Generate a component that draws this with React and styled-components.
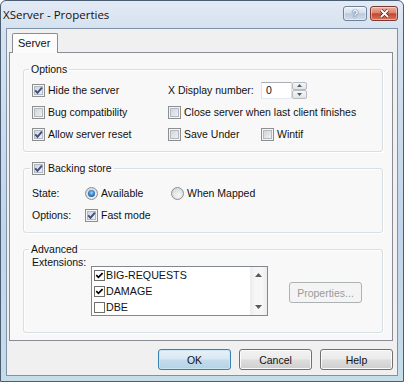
import React from "react";
import styled, { createGlobalStyle } from "styled-components";

const GlobalStyle = createGlobalStyle`
  html, body {
    margin: 0;
    padding: 0;
  }
  body {
    width: 404px;
    height: 382px;
    overflow: hidden;
    background: #ffffff;
    font-family: "Liberation Sans", Arial, sans-serif;
    font-size: 10.5px;
    color: #111;
  }
`;

const Window = styled.div`
  width: 404px;
  height: 382px;
  box-sizing: border-box;
  display: flex;
  flex-direction: column;
  border: 1px solid #4a5d73;
  border-radius: 6px 6px 0 0;
  background: linear-gradient(#e2eaf5 0, #d6e2f0 28px, #c2d5ea 60%, #c6dde9 100%);
`;

const TitleBar = styled.div`
  height: 27px;
  flex: none;
  display: flex;
  align-items: flex-start;
  justify-content: space-between;
  padding: 0 5px 0 2px;
`;

const Title = styled.div`
  font-family: "Open Sans", "Noto Sans", sans-serif;
  font-size: 11.5px;
  line-height: 27px;
  color: #111;
`;

const CaptionButtons = styled.div`
  display: flex;
  gap: 3px;
  margin-top: 5px;
`;

const CaptionButton = styled.div`
  width: ${(p) => (p.$close ? 28 : 24)}px;
  height: 15px;
  box-sizing: border-box;
  border: 1px solid ${(p) => (p.$close ? "#7a3a30" : "#6f8299")};
  border-radius: 3px;
  display: flex;
  align-items: center;
  justify-content: center;
  background: ${(p) =>
    p.$close
      ? "linear-gradient(#eab0a2, #d98470 45%, #c4462f 52%, #d8735c)"
      : "linear-gradient(#eef3f9, #d3deeb 45%, #bccbdd 52%, #cfdcea)"};
  box-shadow: inset 0 0 0 1px rgba(255, 255, 255, 0.45);
  color: #fff;
  font-weight: bold;
  font-size: 11px;
  text-shadow: 0 0 1px #34475e, 0 0 1px #34475e;
`;

const Frame = styled.div`
  flex: 1;
  display: flex;
  padding: 0 5px 5px 5px;
`;

const Client = styled.div`
  flex: 1;
  display: flex;
  flex-direction: column;
  border: 1px solid #7f93a8;
  background: #f0f0f0;
  padding: 4px 4px 0 2px;
`;

const Tab = styled.div`
  align-self: flex-start;
  margin-left: 3px;
  margin-bottom: -1px;
  height: 20px;
  box-sizing: border-box;
  padding: 0 7px 0 5px;
  line-height: 19px;
  font-size: 11px;
  border: 1px solid #898c95;
  border-bottom: none;
  border-radius: 2px 2px 0 0;
  background: #fcfcfc;
  position: relative;
  z-index: 1;
`;

const Panel = styled.div`
  display: flex;
  flex-direction: column;
  gap: 10px;
  border: 1px solid #898c95;
  background: #f8f8f8;
  padding: 10px 9px 7px 13px;
`;

const Group = styled.fieldset`
  margin: 0;
  min-width: 0;
  border: 1px solid #d5dfe5;
  border-radius: 3px;
  box-shadow: inset 1px 1px 0 #ffffff, 1px 1px 0 #ffffff;
  padding: ${(p) => p.$pad};
`;

const GroupLegend = styled.legend`
  display: flex;
  align-items: center;
  gap: 3px;
  padding: 0 2px;
  margin-left: ${(p) => p.$shift}px;
  line-height: 13px;
`;

const OptionsGrid = styled.div`
  display: grid;
  grid-template-columns: 136px 93px 1fr;
  grid-auto-rows: 22px;
  align-items: center;
`;

const BackingGrid = styled.div`
  display: grid;
  grid-template-columns: 53px 86px 1fr;
  grid-auto-rows: 22px;
  align-items: center;
`;

const Cell = styled.div`
  display: flex;
  align-items: center;
  grid-column: ${(p) => p.$span || "auto"};
`;

const CheckLabel = styled.label`
  display: flex;
  align-items: center;
  gap: 3px;
  white-space: nowrap;
  line-height: 13px;
`;

const CheckBox = styled.span`
  width: 13px;
  height: 13px;
  box-sizing: border-box;
  flex: none;
  display: flex;
  align-items: center;
  justify-content: center;
  border: 1px solid #8e8f8f;
  background: linear-gradient(135deg, #c9ced5, #f7f7f7);
  box-shadow: inset 0 0 0 1px #f4f4f4, inset 0 0 0 2px #b3b9c0;
`;

const RadioDot = styled.span`
  width: 13px;
  height: 13px;
  box-sizing: border-box;
  flex: none;
  border-radius: 50%;
  display: flex;
  align-items: center;
  justify-content: center;
  border: 1px solid #8e8f8f;
  background: radial-gradient(circle at 60% 65%, #f8f8f8, #c9ced5);
  &::after {
    content: "";
    display: ${(p) => (p.$checked ? "block" : "none")};
    width: 7px;
    height: 7px;
    border-radius: 50%;
    background: radial-gradient(circle at 50% 40%, #9ad6f7 0, #2b78c0 55%, #0e3f7c 100%);
  }
`;

const FieldLabel = styled.span`
  white-space: nowrap;
  line-height: 13px;
`;

const SpinBox = styled.div`
  display: flex;
  height: 17px;
`;

const SpinInput = styled.div`
  width: 31px;
  box-sizing: border-box;
  border: 1px solid;
  border-color: #abadb3 #dbdfe6 #e3e9ef #e2e3ea;
  background: #fff;
  padding-left: 4px;
  line-height: 15px;
`;

const SpinButtons = styled.div`
  width: 15px;
  display: flex;
  flex-direction: column;
`;

const SpinButton = styled.div`
  flex: 1;
  display: flex;
  align-items: center;
  justify-content: center;
  border: 1px solid #b7bcc3;
  border-radius: 2px;
  background: linear-gradient(#f6f6f6, #e4e4e4);
`;

const AdvancedRow = styled.div`
  display: flex;
  align-items: flex-start;
`;

const ExtLabel = styled.span`
  width: 59px;
  flex: none;
  line-height: 13px;
`;

const ListBox = styled.div`
  margin-top: 10px;
  width: 177px;
  height: 50px;
  box-sizing: border-box;
  display: flex;
  border: 1px solid #828790;
  background: #fff;
`;

const ListItems = styled.div`
  flex: 1;
  display: flex;
  flex-direction: column;
  padding-left: 2px;
`;

const ListItem = styled.div`
  height: 16px;
  display: flex;
  align-items: center;
  gap: 1px;
  font-size: 10.7px;
`;

const ListCheck = styled.span`
  width: 11px;
  height: 11px;
  box-sizing: border-box;
  flex: none;
  display: flex;
  align-items: center;
  justify-content: center;
  border: 1px solid #6f6f6f;
  background: #fff;
`;

const ScrollBar = styled.div`
  width: 17px;
  display: flex;
  flex-direction: column;
  justify-content: space-between;
  background: linear-gradient(90deg, #ececec, #f6f6f6 30%, #f6f6f6 70%, #ececec);
`;

const ScrollArrow = styled.div`
  height: 16px;
  display: flex;
  align-items: center;
  justify-content: center;
`;

const PushButton = styled.button`
  width: 73px;
  height: 21px;
  box-sizing: border-box;
  padding: 0;
  font-family: "Liberation Sans", Arial, sans-serif;
  font-size: 10.5px;
  color: #111;
  border: 1px solid #707070;
  border-radius: 3px;
  background: linear-gradient(#f2f2f2 0%, #ebebeb 48%, #dddddd 52%, #cfcfcf 100%);
  box-shadow: inset 0 0 0 1px #fbfbfb;
`;

const DefaultButton = styled(PushButton)`
  border-color: #3c7fb1;
  background: linear-gradient(#e6f1f8 0%, #d7e8f3 48%, #c3dcec 52%, #b4d2e6 100%);
  box-shadow: inset 0 0 0 1px #c9e6f7;
`;

const DisabledButton = styled(PushButton)`
  margin-left: 21px;
  margin-top: 26px;
  color: #9a9a9a;
  border-color: #adb2b5;
  background: #f4f4f4;
  box-shadow: none;
`;

const ButtonRow = styled.div`
  display: flex;
  justify-content: flex-end;
  gap: 8px;
  padding-top: 8px;
`;

const CheckMark = () => (
  <svg width="9" height="9" viewBox="0 0 9 9">
    <path d="M1.2 4.4 L3.5 6.9 L7.9 1.6" fill="none" stroke="#3c4f80" strokeWidth="1.9" />
  </svg>
);

const SmallCheck = () => (
  <svg width="9" height="9" viewBox="0 0 9 9">
    <path d="M1.3 4.2 L3.4 6.4 L7.6 2.1" fill="none" stroke="#000" strokeWidth="1.7" />
  </svg>
);

const Check = ({ checked, children }) => (
  <CheckLabel>
    <CheckBox>{checked && <CheckMark />}</CheckBox>
    {children}
  </CheckLabel>
);

const Radio = ({ checked, children }) => (
  <CheckLabel>
    <RadioDot $checked={checked} />
    {children}
  </CheckLabel>
);

const Arrow = ({ up, w = 7, h = 4, color = "#5a5a5a" }) => (
  <svg width={w} height={h} viewBox={`0 0 ${w} ${h}`}>
    <path d={up ? `M0 ${h} L${w / 2} 0 L${w} ${h}Z` : `M0 0 L${w / 2} ${h} L${w} 0Z`} fill={color} />
  </svg>
);

const extensions = [
  { name: "BIG-REQUESTS", on: true },
  { name: "DAMAGE", on: true },
  { name: "DBE", on: false },
];

export default function App() {
  return (
    <>
      <GlobalStyle />
      <Window>
        <TitleBar>
          <Title>XServer - Properties</Title>
          <CaptionButtons>
            <CaptionButton>?</CaptionButton>
            <CaptionButton $close>
              <svg width="11" height="9" viewBox="0 0 11 9">
                <path d="M2 1 L9 8 M9 1 L2 8" stroke="#5a1f17" strokeWidth="3.2" />
                <path d="M2 1 L9 8 M9 1 L2 8" stroke="#fff" strokeWidth="1.8" />
              </svg>
            </CaptionButton>
          </CaptionButtons>
        </TitleBar>
        <Frame>
          <Client>
            <Tab>Server</Tab>
            <Panel>
              <Group $pad="3px 8px 6px 8px">
                <GroupLegend $shift={-3}>Options</GroupLegend>
                <OptionsGrid>
                  <Cell><Check checked>Hide the server</Check></Cell>
                  <Cell><FieldLabel>X Display number:</FieldLabel></Cell>
                  <Cell>
                    <SpinBox>
                      <SpinInput>0</SpinInput>
                      <SpinButtons>
                        <SpinButton><Arrow up w={5} h={3} color="#4d5d73" /></SpinButton>
                        <SpinButton><Arrow w={5} h={3} color="#4d5d73" /></SpinButton>
                      </SpinButtons>
                    </SpinBox>
                  </Cell>
                  <Cell><Check>Bug compatibility</Check></Cell>
                  <Cell $span="2 / span 2"><Check>Close server when last client finishes</Check></Cell>
                  <Cell><Check checked>Allow server reset</Check></Cell>
                  <Cell><Check>Save Under</Check></Cell>
                  <Cell><Check>Wintif</Check></Cell>
                </OptionsGrid>
              </Group>

              <Group $pad="7px 8px 6px 8px">
                <GroupLegend $shift={-2}>
                  <Check checked>Backing store</Check>
                </GroupLegend>
                <BackingGrid>
                  <Cell><FieldLabel>State:</FieldLabel></Cell>
                  <Cell><Radio checked>Available</Radio></Cell>
                  <Cell><Radio>When Mapped</Radio></Cell>
                  <Cell><FieldLabel>Options:</FieldLabel></Cell>
                  <Cell><Check checked>Fast mode</Check></Cell>
                </BackingGrid>
              </Group>

              <Group $pad="0 8px 16px 8px">
                <GroupLegend $shift={-3}>Advanced</GroupLegend>
                <AdvancedRow>
                  <ExtLabel>Extensions:</ExtLabel>
                  <ListBox>
                    <ListItems>
                      {extensions.map((e) => (
                        <ListItem key={e.name}>
                          <ListCheck>{e.on && <SmallCheck />}</ListCheck>
                          {e.name}
                        </ListItem>
                      ))}
                    </ListItems>
                    <ScrollBar>
                      <ScrollArrow><Arrow up /></ScrollArrow>
                      <ScrollArrow><Arrow /></ScrollArrow>
                    </ScrollBar>
                  </ListBox>
                  <DisabledButton disabled>Properties...</DisabledButton>
                </AdvancedRow>
              </Group>
            </Panel>
            <ButtonRow>
              <DefaultButton>OK</DefaultButton>
              <PushButton>Cancel</PushButton>
              <PushButton>Help</PushButton>
            </ButtonRow>
          </Client>
        </Frame>
      </Window>
    </>
  );
}
